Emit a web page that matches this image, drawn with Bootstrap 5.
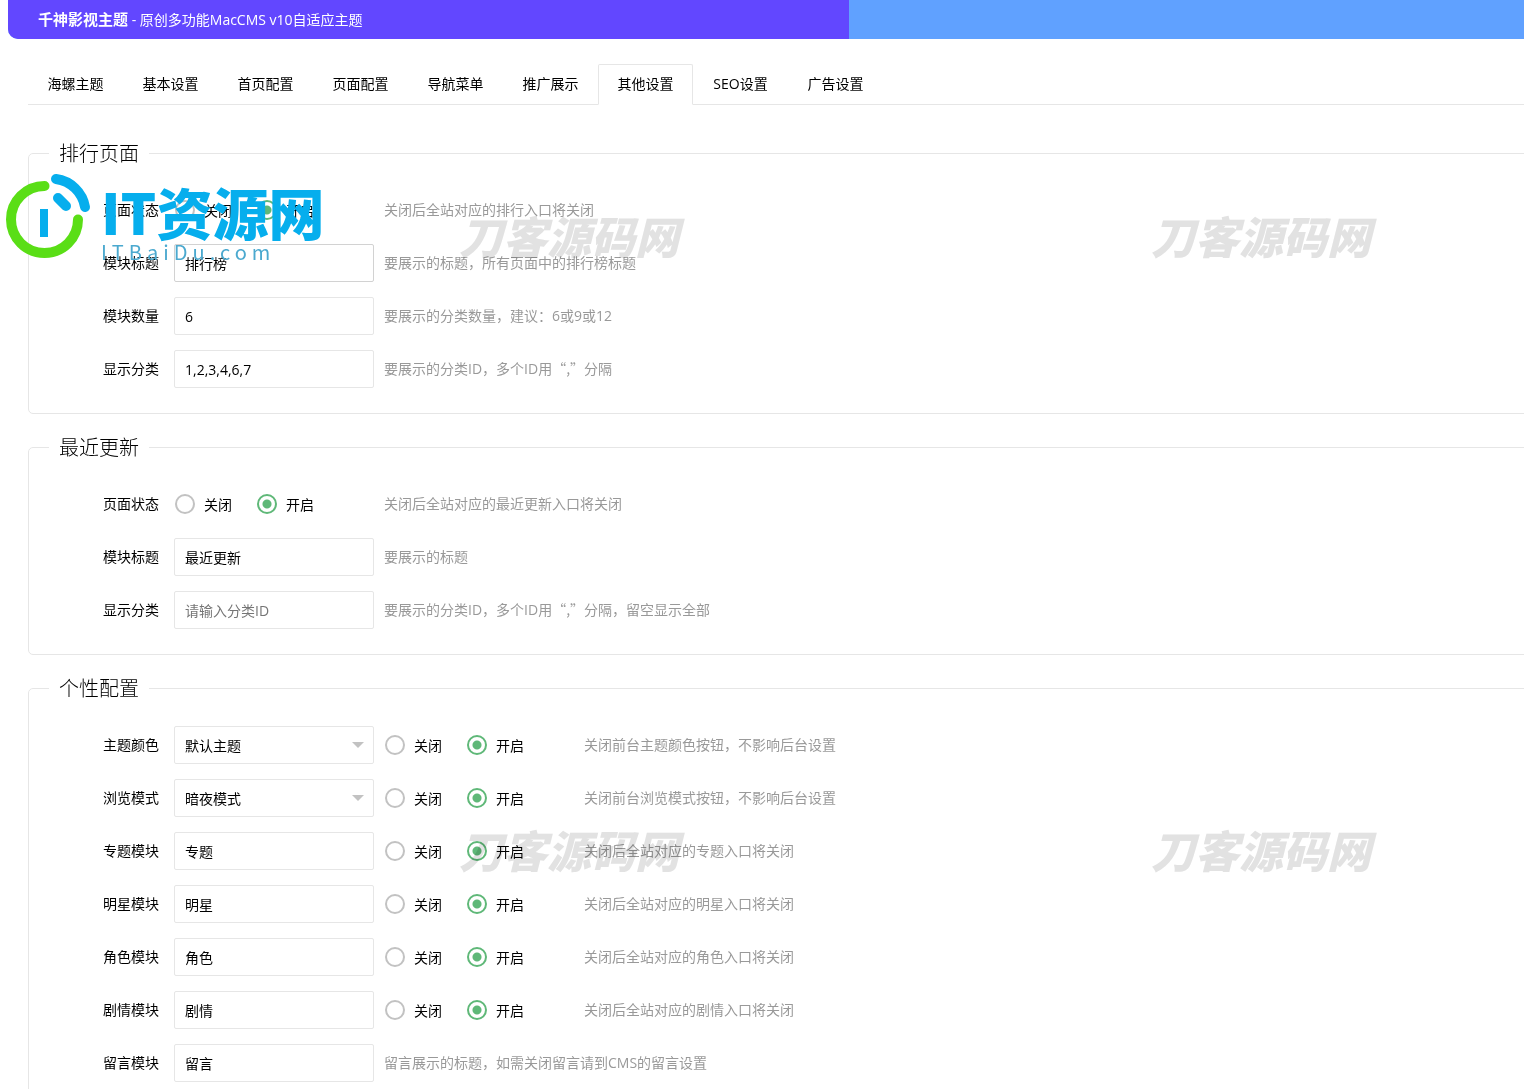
<!DOCTYPE html>
<html lang="zh-CN">
<head>
<meta charset="utf-8">
<meta name="viewport" content="width=device-width, initial-scale=1">
<title>千神影视主题</title>
<link href="https://cdn.jsdelivr.net/npm/bootstrap@5.3.0/dist/css/bootstrap.min.css" rel="stylesheet">
<style>
body{font-family:"Open Sans","Noto Sans CJK SC",sans-serif;font-size:14px;line-height:20px;color:#000;background:#fff;height:100vh;overflow:hidden;padding-left:8px}
.cjk{font-family:"Noto Sans CJK SC",sans-serif;line-height:1}
.topbar{height:39px;background:#60a1ff;border-bottom-left-radius:10px;overflow:hidden}
.topbar-title{flex:0 0 841px;background:#6247ff;padding-left:30px}
.topbar-title b{font-size:15px}
.main-area{padding-left:20px;margin-right:-10px}
.nav-tabs{margin-top:25px;border-bottom:1px solid #e6e6e6}
.nav-tabs .nav-link{min-width:95px;height:41px;padding:9px 0;text-align:center;color:#000;border-radius:2px 2px 0 0;line-height:20px}
.nav-tabs .nav-link.active{color:#000;border-color:#e6e6e6 #e6e6e6 #fff}
.panel{border:1px solid #e6e6e6;border-radius:5px;margin-top:18px;padding-bottom:10px}
.panel-first{margin-top:33px}
.panel legend{float:none;width:auto;margin:0 0 22px 20px;padding:0 10px;font-size:20px;line-height:31px;font-weight:300}
.form-line{min-height:38px;margin-bottom:15px}
.line-label{width:145px;padding-right:15px;text-align:right;flex:none}
.panel .form-control,.panel .form-select{width:200px;height:38px;flex:none;border:1px solid #e6e6e6;border-radius:2px;padding:0 10px;font-size:14px;color:#000;background-color:transparent}
.panel .form-select{background-image:none;padding-right:30px}
.panel .form-control::placeholder{color:#757575}
.panel .is-hover{border-color:#d2d2d2}
.select-box{position:relative;flex:none}
.select-box::after{content:"";position:absolute;right:10px;top:16px;border:6px solid transparent;border-top-color:#c2c2c2;pointer-events:none}
.radio-set{width:200px;flex:none;gap:25px;padding-left:1px}
.radio-set.after-field{width:190px;margin-left:10px}
.radio-set label{display:flex;align-items:center;gap:9px}
.radio-set label span{padding-top:1px}
.radio-set input{appearance:none;width:20px;height:20px;margin:0;border:2px solid #c2c2c2;border-radius:50%}
.radio-set input:checked{border-color:#5fb878;background:radial-gradient(circle,#5fb878 4px,transparent 5px)}
.hint{color:#999;margin-left:10px}
.watermark{position:absolute;font:italic 900 44px/44px "Noto Sans CJK SC",sans-serif;color:#e2e2e2;mix-blend-mode:multiply;pointer-events:none;white-space:nowrap}
.wm-left{left:459px}.wm-right{left:1151px}
.wm-upper{top:213px}.wm-lower{top:827px}
.site-stamp{position:absolute;left:0;top:170px;pointer-events:none;color:#06aeed}
.stamp-words{padding-top:14px;margin-left:7px}
.stamp-name{font:900 56px/54px "Noto Sans CJK SC",sans-serif;white-space:nowrap}
.stamp-host{font:400 20px/28px "Noto Sans CJK SC",sans-serif;letter-spacing:5px;color:#4ba9cf}
</style>
</head>
<body>
<header class="topbar d-flex">
  <div class="topbar-title d-flex align-items-center text-white"><div><b>千神影视主题</b> - 原创多功能MacCMS v10自适应主题</div></div>
</header>
<main class="main-area">
<ul class="nav nav-tabs flex-nowrap">
  <li class="nav-item"><a class="nav-link" href="#">海螺主题</a></li>
  <li class="nav-item"><a class="nav-link" href="#">基本设置</a></li>
  <li class="nav-item"><a class="nav-link" href="#">首页配置</a></li>
  <li class="nav-item"><a class="nav-link" href="#">页面配置</a></li>
  <li class="nav-item"><a class="nav-link" href="#">导航菜单</a></li>
  <li class="nav-item"><a class="nav-link" href="#">推广展示</a></li>
  <li class="nav-item"><a class="nav-link active" href="#" aria-current="page">其他设置</a></li>
  <li class="nav-item"><a class="nav-link" href="#">SEO设置</a></li>
  <li class="nav-item"><a class="nav-link" href="#">广告设置</a></li>
</ul>
<form>
<fieldset class="panel panel-first">
  <legend>排行页面</legend>
  <div class="form-line d-flex align-items-center">
    <span class="line-label">页面状态</span>
    <div class="radio-set d-flex"><label><input type="radio" name="rank"><span>关闭</span></label><label><input type="radio" name="rank" checked><span>开启</span></label></div>
    <span class="hint">关闭后全站对应的排行入口将关闭</span>
  </div>
  <div class="form-line d-flex align-items-center">
    <label class="line-label" for="rank-title">模块标题</label>
    <input class="form-control is-hover" id="rank-title" type="text" value="排行榜">
    <span class="hint">要展示的标题，所有页面中的排行榜标题</span>
  </div>
  <div class="form-line d-flex align-items-center">
    <label class="line-label" for="rank-num">模块数量</label>
    <input class="form-control" id="rank-num" type="text" value="6">
    <span class="hint">要展示的分类数量，建议：6或9或12</span>
  </div>
  <div class="form-line d-flex align-items-center">
    <label class="line-label" for="rank-type">显示分类</label>
    <input class="form-control" id="rank-type" type="text" value="1,2,3,4,6,7">
    <span class="hint">要展示的分类ID，多个ID用<span class="cjk">“,”</span>分隔</span>
  </div>
</fieldset>
<fieldset class="panel">
  <legend>最近更新</legend>
  <div class="form-line d-flex align-items-center">
    <span class="line-label">页面状态</span>
    <div class="radio-set d-flex"><label><input type="radio" name="recent"><span>关闭</span></label><label><input type="radio" name="recent" checked><span>开启</span></label></div>
    <span class="hint">关闭后全站对应的最近更新入口将关闭</span>
  </div>
  <div class="form-line d-flex align-items-center">
    <label class="line-label" for="recent-title">模块标题</label>
    <input class="form-control" id="recent-title" type="text" value="最近更新">
    <span class="hint">要展示的标题</span>
  </div>
  <div class="form-line d-flex align-items-center">
    <label class="line-label" for="recent-type">显示分类</label>
    <input class="form-control" id="recent-type" type="text" placeholder="请输入分类ID">
    <span class="hint">要展示的分类ID，多个ID用<span class="cjk">“,”</span>分隔，留空显示全部</span>
  </div>
</fieldset>
<fieldset class="panel">
  <legend>个性配置</legend>
  <div class="form-line d-flex align-items-center">
    <label class="line-label" for="color">主题颜色</label>
    <div class="select-box"><select class="form-select" id="color"><option>默认主题</option></select></div>
    <div class="radio-set after-field d-flex"><label><input type="radio" name="color-on"><span>关闭</span></label><label><input type="radio" name="color-on" checked><span>开启</span></label></div>
    <span class="hint">关闭前台主题颜色按钮，不影响后台设置</span>
  </div>
  <div class="form-line d-flex align-items-center">
    <label class="line-label" for="mode">浏览模式</label>
    <div class="select-box"><select class="form-select" id="mode"><option>暗夜模式</option></select></div>
    <div class="radio-set after-field d-flex"><label><input type="radio" name="mode-on"><span>关闭</span></label><label><input type="radio" name="mode-on" checked><span>开启</span></label></div>
    <span class="hint">关闭前台浏览模式按钮，不影响后台设置</span>
  </div>
  <div class="form-line d-flex align-items-center">
    <label class="line-label" for="topic">专题模块</label>
    <input class="form-control" id="topic" type="text" value="专题">
    <div class="radio-set after-field d-flex"><label><input type="radio" name="topic-on"><span>关闭</span></label><label><input type="radio" name="topic-on" checked><span>开启</span></label></div>
    <span class="hint">关闭后全站对应的专题入口将关闭</span>
  </div>
  <div class="form-line d-flex align-items-center">
    <label class="line-label" for="star">明星模块</label>
    <input class="form-control" id="star" type="text" value="明星">
    <div class="radio-set after-field d-flex"><label><input type="radio" name="star-on"><span>关闭</span></label><label><input type="radio" name="star-on" checked><span>开启</span></label></div>
    <span class="hint">关闭后全站对应的明星入口将关闭</span>
  </div>
  <div class="form-line d-flex align-items-center">
    <label class="line-label" for="role">角色模块</label>
    <input class="form-control" id="role" type="text" value="角色">
    <div class="radio-set after-field d-flex"><label><input type="radio" name="role-on"><span>关闭</span></label><label><input type="radio" name="role-on" checked><span>开启</span></label></div>
    <span class="hint">关闭后全站对应的角色入口将关闭</span>
  </div>
  <div class="form-line d-flex align-items-center">
    <label class="line-label" for="plot">剧情模块</label>
    <input class="form-control" id="plot" type="text" value="剧情">
    <div class="radio-set after-field d-flex"><label><input type="radio" name="plot-on"><span>关闭</span></label><label><input type="radio" name="plot-on" checked><span>开启</span></label></div>
    <span class="hint">关闭后全站对应的剧情入口将关闭</span>
  </div>
  <div class="form-line d-flex align-items-center">
    <label class="line-label" for="gbook">留言模块</label>
    <input class="form-control" id="gbook" type="text" value="留言">
    <span class="hint">留言展示的标题，如需关闭留言请到CMS的留言设置</span>
  </div>
</fieldset>
</form>
</main>
<div class="watermark wm-left wm-upper">刀客源码网</div>
<div class="watermark wm-right wm-upper">刀客源码网</div>
<div class="watermark wm-left wm-lower">刀客源码网</div>
<div class="watermark wm-right wm-lower">刀客源码网</div>
<div class="site-stamp d-flex">
  <svg width="94" height="92" viewBox="0 170 94 92" fill="none" stroke-linecap="round" stroke-width="10" aria-hidden="true">
    <path stroke="#5ade16" d="M44.500 186A33.500 33.500 0 1 0 78 219.500"/>
    <path stroke="#06aeed" d="M56 179A34 34 0 0 1 85 207M58 198L66 206"/>
    <path fill="#06aeed" d="M40 209h8v28h-8z"/>
  </svg>
  <div class="stamp-words"><div class="stamp-name">IT资源网</div><div class="stamp-host">ITBaiDu.com</div></div>
</div>
<script src="https://cdn.jsdelivr.net/npm/bootstrap@5.3.0/dist/js/bootstrap.bundle.min.js"></script>
</body>
</html>
